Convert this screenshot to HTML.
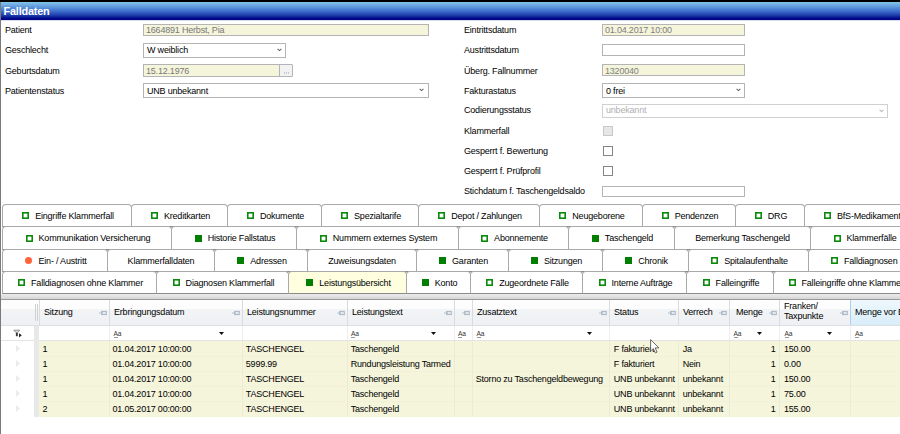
<!DOCTYPE html><html><head><meta charset="utf-8"><style>
*{box-sizing:border-box}
html,body{margin:0;padding:0}
body{width:900px;height:434px;overflow:hidden;position:relative;background:#fff;font-family:"Liberation Sans",sans-serif;font-size:9px;letter-spacing:-0.2px;color:#000}
.a{position:absolute;white-space:nowrap;line-height:12px}
.inp{position:absolute;border:1px solid #b4b4b4;background:#fff}
.dis{background:#f5f5dc}
.tab{position:absolute;height:23px;border:1px solid #a9a9a9;border-bottom-color:#8a8a8a;border-radius:4px 4px 0 0;background:#fff;display:flex;align-items:center;justify-content:center;padding-left:2px;line-height:12px;overflow:hidden;white-space:nowrap}
.hd{position:absolute;top:300px;height:25px;border-right:1px solid #d8dce0;background:linear-gradient(#fdfdfe 0,#fdfdfe 34%,#f3f4f6 35%,#eef0f3 100%)}
.ht{position:absolute;left:4px;top:5.5px;line-height:12px;white-space:nowrap}
.pin{position:absolute;right:2px;top:10px;width:8px;height:6px}
.cell{position:absolute;line-height:15px;white-space:nowrap;overflow:hidden}
</style></head><body>

<div class="a" style="left:0;top:0;width:900px;height:2px;background:#000"></div>
<div class="a" style="left:0;top:2px;width:1px;height:432px;background:#7a7a7a"></div>
<div class="a" style="left:1px;top:2px;width:899px;height:18px;background:linear-gradient(#84c6ea 0%,#5e98dc 28%,#3c6ccc 52%,#1e3caa 74%,#000c8c 90%,#000080 100%)"></div>
<div class="a" style="left:1px;top:20px;width:899px;height:1px;background:#dcdcf0"></div>
<div class="a" style="left:3.5px;top:3.6px;line-height:14px;font-weight:bold;font-size:10.9px;letter-spacing:-0.2px;color:#fff">Falldaten</div>
<div class="a" style="left:5px;top:24.3px;color:#000">Patient</div>
<div class="a" style="left:5px;top:44.3px;color:#000">Geschlecht</div>
<div class="a" style="left:5px;top:64.5px;color:#000">Geburtsdatum</div>
<div class="a" style="left:5px;top:84.7px;color:#000">Patientenstatus</div>
<div class="a" style="left:464px;top:24.3px;color:#000">Eintrittsdatum</div>
<div class="a" style="left:464px;top:44.3px;color:#000">Austrittsdatum</div>
<div class="a" style="left:464px;top:64.5px;color:#000">Überg. Fallnummer</div>
<div class="a" style="left:464px;top:84.7px;color:#000">Fakturastatus</div>
<div class="a" style="left:464px;top:104.0px;color:#000">Codierungsstatus</div>
<div class="a" style="left:464px;top:124.5px;color:#000">Klammerfall</div>
<div class="a" style="left:464px;top:145.0px;color:#000">Gesperrt f. Bewertung</div>
<div class="a" style="left:464px;top:165.0px;color:#000">Gesperrt f. Prüfprofil</div>
<div class="a" style="left:464px;top:185.0px;color:#000">Stichdatum f. Taschengeldsaldo</div>
<div class="inp dis" style="left:143px;top:24px;width:286px;height:12px;"></div>
<div class="a" style="left:146px;top:24.3px;color:#787878">1664891 Herbst, Pia</div>
<div class="inp" style="left:143px;top:43px;width:143px;height:15px;"></div>
<div class="a" style="left:147px;top:44.3px;color:#000">W weiblich</div>
<svg class="a" style="left:277px;top:48px" width="5" height="4" viewBox="0 0 5 4"><path d="M0.6 0.8 L2.5 2.6 L4.4 0.8" fill="none" stroke="#666" stroke-width="1.1"/></svg>
<div class="inp dis" style="left:143px;top:64px;width:138px;height:13px;"></div>
<div class="a" style="left:146px;top:64.5px;color:#787878">15.12.1976</div>
<div class="inp" style="left:279px;top:64px;width:14px;height:13px;background:#f2f2f2;border-color:#b0b4bc;border-radius:1px"></div>
<div class="a" style="left:283.5px;top:72px;width:1px;height:1.5px;background:#c8c8d0"></div>
<div class="a" style="left:285.5px;top:72px;width:1px;height:1.5px;background:#c8c8d0"></div>
<div class="a" style="left:287.5px;top:72px;width:1px;height:1.5px;background:#c8c8d0"></div>
<div class="inp" style="left:143px;top:83px;width:286px;height:15px;"></div>
<div class="a" style="left:147px;top:84.7px;color:#000">UNB unbekannt</div>
<svg class="a" style="left:419px;top:88px" width="5" height="4" viewBox="0 0 5 4"><path d="M0.6 0.8 L2.5 2.6 L4.4 0.8" fill="none" stroke="#666" stroke-width="1.1"/></svg>
<div class="inp dis" style="left:602px;top:24px;width:143px;height:12px;"></div>
<div class="a" style="left:605px;top:24.3px;color:#808080">01.04.2017 10:00</div>
<div class="inp" style="left:602px;top:44px;width:143px;height:12px;"></div>
<div class="inp dis" style="left:602px;top:64px;width:143px;height:12px;"></div>
<div class="a" style="left:605px;top:64.5px;color:#808080">1320040</div>
<div class="inp" style="left:602px;top:83px;width:143px;height:15px;"></div>
<div class="a" style="left:606px;top:84.7px;color:#000">0 frei</div>
<svg class="a" style="left:736px;top:88px" width="5" height="4" viewBox="0 0 5 4"><path d="M0.6 0.8 L2.5 2.6 L4.4 0.8" fill="none" stroke="#666" stroke-width="1.1"/></svg>
<div class="inp" style="left:602px;top:104px;width:286px;height:14px;border-color:#d0d0d0"></div>
<div class="a" style="left:606px;top:104.0px;color:#b0b0b0">unbekannt</div>
<svg class="a" style="left:879px;top:109px" width="5" height="4" viewBox="0 0 5 4"><path d="M0.6 0.8 L2.5 2.6 L4.4 0.8" fill="none" stroke="#b8b8b8" stroke-width="1.1"/></svg>
<div class="inp" style="left:603px;top:126px;width:10px;height:10px;background:#e6e6e6;border-color:#c8c8c8"></div>
<div class="inp" style="left:603px;top:146px;width:10px;height:10px;border-color:#858585"></div>
<div class="inp" style="left:603px;top:166px;width:10px;height:10px;border-color:#858585"></div>
<div class="inp" style="left:602px;top:186px;width:143px;height:11px;"></div>
<div class="tab" style="left:2px;top:204px;width:130px;height:23px;"><svg width="7" height="7" style="flex:none;margin-right:6px" viewBox="0 0 7 7"><rect x="0.8" y="0.8" width="5.4" height="5.4" fill="none" stroke="#0b8a0b" stroke-width="1.6"/></svg><span>Eingriffe Klammerfall</span></div>
<div class="tab" style="left:131px;top:204px;width:97px;height:23px;"><svg width="7" height="7" style="flex:none;margin-right:6px" viewBox="0 0 7 7"><rect x="0.8" y="0.8" width="5.4" height="5.4" fill="none" stroke="#0b8a0b" stroke-width="1.6"/></svg><span>Kreditkarten</span></div>
<div class="tab" style="left:227px;top:204px;width:95px;height:23px;"><svg width="7" height="7" style="flex:none;margin-right:6px" viewBox="0 0 7 7"><rect x="0.8" y="0.8" width="5.4" height="5.4" fill="none" stroke="#0b8a0b" stroke-width="1.6"/></svg><span>Dokumente</span></div>
<div class="tab" style="left:321px;top:204px;width:98px;height:23px;"><svg width="7" height="7" style="flex:none;margin-right:6px" viewBox="0 0 7 7"><rect x="0.8" y="0.8" width="5.4" height="5.4" fill="none" stroke="#0b8a0b" stroke-width="1.6"/></svg><span>Spezialtarife</span></div>
<div class="tab" style="left:418px;top:204px;width:122px;height:23px;"><svg width="7" height="7" style="flex:none;margin-right:6px" viewBox="0 0 7 7"><rect x="0.8" y="0.8" width="5.4" height="5.4" fill="none" stroke="#0b8a0b" stroke-width="1.6"/></svg><span>Depot / Zahlungen</span></div>
<div class="tab" style="left:539px;top:204px;width:104px;height:23px;"><svg width="7" height="7" style="flex:none;margin-right:6px" viewBox="0 0 7 7"><rect x="0.8" y="0.8" width="5.4" height="5.4" fill="none" stroke="#0b8a0b" stroke-width="1.6"/></svg><span>Neugeborene</span></div>
<div class="tab" style="left:642px;top:204px;width:94px;height:23px;"><svg width="7" height="7" style="flex:none;margin-right:6px" viewBox="0 0 7 7"><rect x="0.8" y="0.8" width="5.4" height="5.4" fill="none" stroke="#0b8a0b" stroke-width="1.6"/></svg><span>Pendenzen</span></div>
<div class="tab" style="left:735px;top:204px;width:70px;height:23px;"><svg width="7" height="7" style="flex:none;margin-right:6px" viewBox="0 0 7 7"><rect x="0.8" y="0.8" width="5.4" height="5.4" fill="none" stroke="#0b8a0b" stroke-width="1.6"/></svg><span>DRG</span></div>
<div class="tab" style="left:804px;top:204px;width:197px;height:23px;justify-content:flex-start;padding-left:19px;"><svg width="7" height="7" style="flex:none;margin-right:6px" viewBox="0 0 7 7"><rect x="0.8" y="0.8" width="5.4" height="5.4" fill="none" stroke="#0b8a0b" stroke-width="1.6"/></svg><span>BfS-Medikamente</span></div>
<div class="tab" style="left:2px;top:226px;width:170px;height:24px;"><svg width="7" height="7" style="flex:none;margin-right:6px" viewBox="0 0 7 7"><rect x="0.8" y="0.8" width="5.4" height="5.4" fill="none" stroke="#0b8a0b" stroke-width="1.6"/></svg><span>Kommunikation Versicherung</span></div>
<div class="tab" style="left:171px;top:226px;width:126px;height:24px;"><svg width="7" height="7" style="flex:none;margin-right:6px" viewBox="0 0 7 7"><rect x="0" y="0" width="7" height="7" fill="#007f00"/></svg><span>Historie Fallstatus</span></div>
<div class="tab" style="left:296px;top:226px;width:163px;height:24px;"><svg width="7" height="7" style="flex:none;margin-right:6px" viewBox="0 0 7 7"><rect x="0.8" y="0.8" width="5.4" height="5.4" fill="none" stroke="#0b8a0b" stroke-width="1.6"/></svg><span>Nummern externes System</span></div>
<div class="tab" style="left:458px;top:226px;width:111px;height:24px;"><svg width="7" height="7" style="flex:none;margin-right:6px" viewBox="0 0 7 7"><rect x="0.8" y="0.8" width="5.4" height="5.4" fill="none" stroke="#0b8a0b" stroke-width="1.6"/></svg><span>Abonnemente</span></div>
<div class="tab" style="left:568px;top:226px;width:107px;height:24px;"><svg width="7" height="7" style="flex:none;margin-right:6px" viewBox="0 0 7 7"><rect x="0" y="0" width="7" height="7" fill="#007f00"/></svg><span>Taschengeld</span></div>
<div class="tab" style="left:674px;top:226px;width:137px;height:24px;padding-left:0;"><span>Bemerkung Taschengeld</span></div>
<div class="tab" style="left:810px;top:226px;width:191px;height:24px;justify-content:flex-start;padding-left:22.5px;"><svg width="7" height="7" style="flex:none;margin-right:6px" viewBox="0 0 7 7"><rect x="0.8" y="0.8" width="5.4" height="5.4" fill="none" stroke="#0b8a0b" stroke-width="1.6"/></svg><span>Klammerfälle</span></div>
<div class="tab" style="left:2px;top:249px;width:106px;height:23px;"><svg width="7" height="7" style="flex:none;margin-right:6px" viewBox="0 0 7 7"><circle cx="3.5" cy="3.5" r="3.5" fill="#ff6438"/></svg><span>Ein- / Austritt</span></div>
<div class="tab" style="left:107px;top:249px;width:108px;height:23px;padding-left:0;"><span>Klammerfalldaten</span></div>
<div class="tab" style="left:214px;top:249px;width:94px;height:23px;"><svg width="7" height="7" style="flex:none;margin-right:6px" viewBox="0 0 7 7"><rect x="0" y="0" width="7" height="7" fill="#007f00"/></svg><span>Adressen</span></div>
<div class="tab" style="left:307px;top:249px;width:110px;height:23px;padding-left:0;"><span>Zuweisungsdaten</span></div>
<div class="tab" style="left:416px;top:249px;width:93px;height:23px;"><svg width="7" height="7" style="flex:none;margin-right:6px" viewBox="0 0 7 7"><rect x="0" y="0" width="7" height="7" fill="#007f00"/></svg><span>Garanten</span></div>
<div class="tab" style="left:508px;top:249px;width:95px;height:23px;"><svg width="7" height="7" style="flex:none;margin-right:6px" viewBox="0 0 7 7"><rect x="0" y="0" width="7" height="7" fill="#007f00"/></svg><span>Sitzungen</span></div>
<div class="tab" style="left:602px;top:249px;width:87px;height:23px;"><svg width="7" height="7" style="flex:none;margin-right:6px" viewBox="0 0 7 7"><rect x="0" y="0" width="7" height="7" fill="#007f00"/></svg><span>Chronik</span></div>
<div class="tab" style="left:688px;top:249px;width:121px;height:23px;"><svg width="7" height="7" style="flex:none;margin-right:6px" viewBox="0 0 7 7"><rect x="0.8" y="0.8" width="5.4" height="5.4" fill="none" stroke="#0b8a0b" stroke-width="1.6"/></svg><span>Spitalaufenthalte</span></div>
<div class="tab" style="left:808px;top:249px;width:193px;height:23px;justify-content:flex-start;padding-left:22px;"><svg width="7" height="7" style="flex:none;margin-right:6px" viewBox="0 0 7 7"><rect x="0.8" y="0.8" width="5.4" height="5.4" fill="none" stroke="#0b8a0b" stroke-width="1.6"/></svg><span>Falldiagnosen</span></div>
<div class="tab" style="left:2px;top:271px;width:155px;height:23px;"><svg width="7" height="7" style="flex:none;margin-right:6px" viewBox="0 0 7 7"><rect x="0.8" y="0.8" width="5.4" height="5.4" fill="none" stroke="#0b8a0b" stroke-width="1.6"/></svg><span>Falldiagnosen ohne Klammer</span></div>
<div class="tab" style="left:156px;top:271px;width:133px;height:23px;"><svg width="7" height="7" style="flex:none;margin-right:6px" viewBox="0 0 7 7"><rect x="0.8" y="0.8" width="5.4" height="5.4" fill="none" stroke="#0b8a0b" stroke-width="1.6"/></svg><span>Diagnosen Klammerfall</span></div>
<div class="tab" style="left:288px;top:271px;width:119px;height:23px;background:#ffffe0;"><svg width="7" height="7" style="flex:none;margin-right:6px" viewBox="0 0 7 7"><rect x="0" y="0" width="7" height="7" fill="#007f00"/></svg><span>Leistungsübersicht</span></div>
<div class="tab" style="left:406px;top:271px;width:65px;height:23px;"><svg width="7" height="7" style="flex:none;margin-right:6px" viewBox="0 0 7 7"><rect x="0" y="0" width="7" height="7" fill="#007f00"/></svg><span>Konto</span></div>
<div class="tab" style="left:470px;top:271px;width:113px;height:23px;"><svg width="7" height="7" style="flex:none;margin-right:6px" viewBox="0 0 7 7"><rect x="0.8" y="0.8" width="5.4" height="5.4" fill="none" stroke="#0b8a0b" stroke-width="1.6"/></svg><span>Zugeordnete Fälle</span></div>
<div class="tab" style="left:582px;top:271px;width:105px;height:23px;"><svg width="7" height="7" style="flex:none;margin-right:6px" viewBox="0 0 7 7"><rect x="0.8" y="0.8" width="5.4" height="5.4" fill="none" stroke="#0b8a0b" stroke-width="1.6"/></svg><span>Interne Aufträge</span></div>
<div class="tab" style="left:686px;top:271px;width:88px;height:23px;"><svg width="7" height="7" style="flex:none;margin-right:6px" viewBox="0 0 7 7"><rect x="0.8" y="0.8" width="5.4" height="5.4" fill="none" stroke="#0b8a0b" stroke-width="1.6"/></svg><span>Falleingriffe</span></div>
<div class="tab" style="left:773px;top:271px;width:228px;height:23px;justify-content:flex-start;padding-left:14.5px;"><svg width="7" height="7" style="flex:none;margin-right:6px" viewBox="0 0 7 7"><rect x="0.8" y="0.8" width="5.4" height="5.4" fill="none" stroke="#0b8a0b" stroke-width="1.6"/></svg><span>Falleingriffe ohne Klammer</span></div>
<div class="a" style="left:1px;top:294px;width:899px;height:5px;background:linear-gradient(#ececec,#d6d6d6)"></div>
<div class="a" style="left:1px;top:299px;width:899px;height:1px;background:#999"></div>
<div class="hd" style="left:1px;width:39px;border-right:1px solid #d8dce0"></div>
<div class="a" style="left:35px;top:304px;width:1px;height:17px;background:#d0d0d0"></div>
<div class="a" style="left:37px;top:304px;width:1px;height:17px;background:#d0d0d0"></div>
<div class="hd" style="left:40px;width:70px;"><div class="ht" style="">Sitzung</div><svg class="pin" viewBox="0 0 8 6"><path d="M0 3H2.6M2.6 1V5" fill="none" stroke="#b4c0cc" stroke-width="1"/><rect x="3.1" y="1.4" width="4.2" height="3.2" fill="#e4e9ee" stroke="#a8b6c4" stroke-width="1"/></svg></div>
<div class="hd" style="left:110px;width:133px;"><div class="ht" style="">Erbringungsdatum</div><svg class="pin" viewBox="0 0 8 6"><path d="M0 3H2.6M2.6 1V5" fill="none" stroke="#b4c0cc" stroke-width="1"/><rect x="3.1" y="1.4" width="4.2" height="3.2" fill="#e4e9ee" stroke="#a8b6c4" stroke-width="1"/></svg></div>
<div class="hd" style="left:243px;width:105px;"><div class="ht" style="">Leistungsnummer</div><svg class="pin" viewBox="0 0 8 6"><path d="M0 3H2.6M2.6 1V5" fill="none" stroke="#b4c0cc" stroke-width="1"/><rect x="3.1" y="1.4" width="4.2" height="3.2" fill="#e4e9ee" stroke="#a8b6c4" stroke-width="1"/></svg></div>
<div class="hd" style="left:348px;width:107px;"><div class="ht" style="">Leistungstext</div><svg class="pin" viewBox="0 0 8 6"><path d="M0 3H2.6M2.6 1V5" fill="none" stroke="#b4c0cc" stroke-width="1"/><rect x="3.1" y="1.4" width="4.2" height="3.2" fill="#e4e9ee" stroke="#a8b6c4" stroke-width="1"/></svg></div>
<div class="hd" style="left:455px;width:18px;"><div class="ht" style=""></div><svg class="pin" viewBox="0 0 8 6"><path d="M0 3H2.6M2.6 1V5" fill="none" stroke="#b4c0cc" stroke-width="1"/><rect x="3.1" y="1.4" width="4.2" height="3.2" fill="#e4e9ee" stroke="#a8b6c4" stroke-width="1"/></svg></div>
<div class="hd" style="left:473px;width:137px;"><div class="ht" style="">Zusatztext</div><svg class="pin" viewBox="0 0 8 6"><path d="M0 3H2.6M2.6 1V5" fill="none" stroke="#b4c0cc" stroke-width="1"/><rect x="3.1" y="1.4" width="4.2" height="3.2" fill="#e4e9ee" stroke="#a8b6c4" stroke-width="1"/></svg></div>
<div class="hd" style="left:610px;width:69px;"><div class="ht" style="">Status</div><svg class="pin" viewBox="0 0 8 6"><path d="M0 3H2.6M2.6 1V5" fill="none" stroke="#b4c0cc" stroke-width="1"/><rect x="3.1" y="1.4" width="4.2" height="3.2" fill="#e4e9ee" stroke="#a8b6c4" stroke-width="1"/></svg></div>
<div class="hd" style="left:679px;width:51px;"><div class="ht" style="">Verrech</div><svg class="pin" viewBox="0 0 8 6"><path d="M0 3H2.6M2.6 1V5" fill="none" stroke="#b4c0cc" stroke-width="1"/><rect x="3.1" y="1.4" width="4.2" height="3.2" fill="#e4e9ee" stroke="#a8b6c4" stroke-width="1"/></svg></div>
<div class="hd" style="left:730px;width:50px;"><div class="ht" style="left:6px">Menge</div><svg class="pin" viewBox="0 0 8 6"><path d="M0 3H2.6M2.6 1V5" fill="none" stroke="#b4c0cc" stroke-width="1"/><rect x="3.1" y="1.4" width="4.2" height="3.2" fill="#e4e9ee" stroke="#a8b6c4" stroke-width="1"/></svg></div>
<div class="hd" style="left:780px;width:71px;"><div class="ht" style="top:1.3px;line-height:10px">Franken/<br>Taxpunkte</div><svg class="pin" viewBox="0 0 8 6"><path d="M0 3H2.6M2.6 1V5" fill="none" stroke="#b4c0cc" stroke-width="1"/><rect x="3.1" y="1.4" width="4.2" height="3.2" fill="#e4e9ee" stroke="#a8b6c4" stroke-width="1"/></svg></div>
<div class="hd" style="left:851px;width:150px;background:linear-gradient(#eef8fd,#d9edf9);border-left:1px solid #a8d2f0;border-bottom:1px solid #a8d2f0;margin-left:-1px;height:26px;"><div class="ht" style="">Menge vor Beh.</div></div>
<div class="a" style="left:1px;top:325px;width:899px;height:1px;background:#dcdfe3"></div>
<div class="a" style="left:1px;top:326px;width:899px;height:15px;background:#fff"></div>
<div class="a" style="left:1px;top:340px;width:899px;height:1px;background:#e4e4e4"></div>
<div class="a" style="left:34px;top:326px;width:5px;height:91px;background:#e8e8e8"></div>
<svg class="a" style="left:13px;top:329px" width="10" height="10" viewBox="0 0 10 10"><path d="M0.8 1.2H6.8L4.4 3.8H3.2Z" fill="#ddd" stroke="#8a8a8a" stroke-width="0.9" stroke-linejoin="round"/><rect x="2.9" y="3.8" width="1.9" height="3.4" fill="#333"/><path d="M6 4.2L8.8 6.3L6 8.4Z" fill="#222"/></svg>
<div class="a" style="left:113.5px;top:329px;font-size:6.6px;line-height:9px;color:#333">Aa</div>
<div class="a" style="left:113.8px;top:337px;width:4px;height:1px;background:#999"></div>
<div class="a" style="left:351px;top:329px;font-size:6.6px;line-height:9px;color:#333">Aa</div>
<div class="a" style="left:351.3px;top:337px;width:4px;height:1px;background:#999"></div>
<div class="a" style="left:458px;top:329px;font-size:6.6px;line-height:9px;color:#333">Aa</div>
<div class="a" style="left:458.3px;top:337px;width:4px;height:1px;background:#999"></div>
<div class="a" style="left:476.5px;top:329px;font-size:6.6px;line-height:9px;color:#333">Aa</div>
<div class="a" style="left:476.8px;top:337px;width:4px;height:1px;background:#999"></div>
<div class="a" style="left:733.5px;top:329px;font-size:6.6px;line-height:9px;color:#333">Aa</div>
<div class="a" style="left:733.8px;top:337px;width:4px;height:1px;background:#999"></div>
<div class="a" style="left:784.5px;top:329px;font-size:6.6px;line-height:9px;color:#333">Aa</div>
<div class="a" style="left:784.8px;top:337px;width:4px;height:1px;background:#999"></div>
<div class="a" style="left:855px;top:329px;font-size:6.6px;line-height:9px;color:#333">Aa</div>
<div class="a" style="left:855.3px;top:337px;width:4px;height:1px;background:#999"></div>
<svg class="a" style="left:219.0px;top:332px" width="5" height="3" viewBox="0 0 5 3"><path d="M0 0H5L2.5 3Z" fill="#111"/></svg>
<svg class="a" style="left:431.0px;top:332px" width="5" height="3" viewBox="0 0 5 3"><path d="M0 0H5L2.5 3Z" fill="#111"/></svg>
<svg class="a" style="left:586.5px;top:332px" width="5" height="3" viewBox="0 0 5 3"><path d="M0 0H5L2.5 3Z" fill="#111"/></svg>
<svg class="a" style="left:756.5px;top:332px" width="5" height="3" viewBox="0 0 5 3"><path d="M0 0H5L2.5 3Z" fill="#111"/></svg>
<svg class="a" style="left:827.0px;top:332px" width="5" height="3" viewBox="0 0 5 3"><path d="M0 0H5L2.5 3Z" fill="#111"/></svg>
<div class="a" style="left:109px;top:326px;width:1px;height:14px;background:#eeeeee"></div>
<div class="a" style="left:242px;top:326px;width:1px;height:14px;background:#eeeeee"></div>
<div class="a" style="left:347px;top:326px;width:1px;height:14px;background:#eeeeee"></div>
<div class="a" style="left:454px;top:326px;width:1px;height:14px;background:#eeeeee"></div>
<div class="a" style="left:472px;top:326px;width:1px;height:14px;background:#eeeeee"></div>
<div class="a" style="left:609px;top:326px;width:1px;height:14px;background:#eeeeee"></div>
<div class="a" style="left:729px;top:326px;width:1px;height:14px;background:#eeeeee"></div>
<div class="a" style="left:779px;top:326px;width:1px;height:14px;background:#eeeeee"></div>
<div class="a" style="left:850px;top:326px;width:1px;height:14px;background:#eeeeee"></div>
<div class="a" style="left:39px;top:341px;width:861px;height:76px;background:#f5f5dc"></div>
<svg class="a" style="left:16px;top:345px" width="4" height="7" viewBox="0 0 4 7"><path d="M0 0L4 3.5L0 7Z" fill="#ebebeb"/></svg>
<div class="cell" style="left:39px;top:342px;width:70px;padding-left:3.5px">1</div>
<div class="cell" style="left:109px;top:342px;width:133px;padding-left:3.5px">01.04.2017 10:00:00</div>
<div class="cell" style="left:242px;top:342px;width:105px;padding-left:3.8px">TASCHENGEL</div>
<div class="cell" style="left:347px;top:342px;width:107px;padding-left:3.7px">Taschengeld</div>
<div class="cell" style="left:454px;top:342px;width:18px;padding-left:4px"></div>
<div class="cell" style="left:472px;top:342px;width:137px;padding-left:3.7px"></div>
<div class="cell" style="left:609px;top:342px;width:69px;padding-left:4.8px">F fakturiert</div>
<div class="cell" style="left:678px;top:342px;width:51px;padding-left:4.7px">Ja</div>
<div class="cell" style="left:729px;top:342px;width:50px;text-align:right;padding-right:3.5px">1</div>
<div class="cell" style="left:779px;top:342px;width:71px;padding-left:5px">150.00</div>
<div class="cell" style="left:850px;top:342px;width:150px;padding-left:5px"></div>
<div class="a" style="left:39px;top:356px;width:861px;height:1px;background:#f1f1da"></div>
<svg class="a" style="left:16px;top:360px" width="4" height="7" viewBox="0 0 4 7"><path d="M0 0L4 3.5L0 7Z" fill="#ebebeb"/></svg>
<div class="cell" style="left:39px;top:357px;width:70px;padding-left:3.5px">1</div>
<div class="cell" style="left:109px;top:357px;width:133px;padding-left:3.5px">01.04.2017 10:00:00</div>
<div class="cell" style="left:242px;top:357px;width:105px;padding-left:3.8px">5999.99</div>
<div class="cell" style="left:347px;top:357px;width:107px;padding-left:3.7px">Rundungsleistung Tarmed</div>
<div class="cell" style="left:454px;top:357px;width:18px;padding-left:4px"></div>
<div class="cell" style="left:472px;top:357px;width:137px;padding-left:3.7px"></div>
<div class="cell" style="left:609px;top:357px;width:69px;padding-left:4.8px">F fakturiert</div>
<div class="cell" style="left:678px;top:357px;width:51px;padding-left:4.7px">Nein</div>
<div class="cell" style="left:729px;top:357px;width:50px;text-align:right;padding-right:3.5px">1</div>
<div class="cell" style="left:779px;top:357px;width:71px;padding-left:5px">0.00</div>
<div class="cell" style="left:850px;top:357px;width:150px;padding-left:5px"></div>
<div class="a" style="left:39px;top:371px;width:861px;height:1px;background:#f1f1da"></div>
<svg class="a" style="left:16px;top:375px" width="4" height="7" viewBox="0 0 4 7"><path d="M0 0L4 3.5L0 7Z" fill="#ebebeb"/></svg>
<div class="cell" style="left:39px;top:372px;width:70px;padding-left:3.5px">1</div>
<div class="cell" style="left:109px;top:372px;width:133px;padding-left:3.5px">01.04.2017 10:00:00</div>
<div class="cell" style="left:242px;top:372px;width:105px;padding-left:3.8px">TASCHENGEL</div>
<div class="cell" style="left:347px;top:372px;width:107px;padding-left:3.7px">Taschengeld</div>
<div class="cell" style="left:454px;top:372px;width:18px;padding-left:4px"></div>
<div class="cell" style="left:472px;top:372px;width:137px;padding-left:3.7px">Storno zu Taschengeldbewegung</div>
<div class="cell" style="left:609px;top:372px;width:69px;padding-left:4.8px">UNB unbekannt</div>
<div class="cell" style="left:678px;top:372px;width:51px;padding-left:4.7px">unbekannt</div>
<div class="cell" style="left:729px;top:372px;width:50px;text-align:right;padding-right:3.5px">1</div>
<div class="cell" style="left:779px;top:372px;width:71px;padding-left:5px">150.00</div>
<div class="cell" style="left:850px;top:372px;width:150px;padding-left:5px"></div>
<div class="a" style="left:39px;top:386px;width:861px;height:1px;background:#f1f1da"></div>
<svg class="a" style="left:16px;top:390px" width="4" height="7" viewBox="0 0 4 7"><path d="M0 0L4 3.5L0 7Z" fill="#ebebeb"/></svg>
<div class="cell" style="left:39px;top:387px;width:70px;padding-left:3.5px">1</div>
<div class="cell" style="left:109px;top:387px;width:133px;padding-left:3.5px">01.04.2017 10:00:00</div>
<div class="cell" style="left:242px;top:387px;width:105px;padding-left:3.8px">TASCHENGEL</div>
<div class="cell" style="left:347px;top:387px;width:107px;padding-left:3.7px">Taschengeld</div>
<div class="cell" style="left:454px;top:387px;width:18px;padding-left:4px"></div>
<div class="cell" style="left:472px;top:387px;width:137px;padding-left:3.7px"></div>
<div class="cell" style="left:609px;top:387px;width:69px;padding-left:4.8px">UNB unbekannt</div>
<div class="cell" style="left:678px;top:387px;width:51px;padding-left:4.7px">unbekannt</div>
<div class="cell" style="left:729px;top:387px;width:50px;text-align:right;padding-right:3.5px">1</div>
<div class="cell" style="left:779px;top:387px;width:71px;padding-left:5px">75.00</div>
<div class="cell" style="left:850px;top:387px;width:150px;padding-left:5px"></div>
<div class="a" style="left:39px;top:401px;width:861px;height:1px;background:#f1f1da"></div>
<svg class="a" style="left:16px;top:405px" width="4" height="7" viewBox="0 0 4 7"><path d="M0 0L4 3.5L0 7Z" fill="#ebebeb"/></svg>
<div class="cell" style="left:39px;top:402px;width:70px;padding-left:3.5px">2</div>
<div class="cell" style="left:109px;top:402px;width:133px;padding-left:3.5px">01.05.2017 00:00:00</div>
<div class="cell" style="left:242px;top:402px;width:105px;padding-left:3.8px">TASCHENGEL</div>
<div class="cell" style="left:347px;top:402px;width:107px;padding-left:3.7px">Taschengeld</div>
<div class="cell" style="left:454px;top:402px;width:18px;padding-left:4px"></div>
<div class="cell" style="left:472px;top:402px;width:137px;padding-left:3.7px"></div>
<div class="cell" style="left:609px;top:402px;width:69px;padding-left:4.8px">UNB unbekannt</div>
<div class="cell" style="left:678px;top:402px;width:51px;padding-left:4.7px">unbekannt</div>
<div class="cell" style="left:729px;top:402px;width:50px;text-align:right;padding-right:3.5px">1</div>
<div class="cell" style="left:779px;top:402px;width:71px;padding-left:5px">155.00</div>
<div class="cell" style="left:850px;top:402px;width:150px;padding-left:5px"></div>
<div class="a" style="left:109px;top:341px;width:1px;height:76px;background:#ebebd6"></div>
<div class="a" style="left:242px;top:341px;width:1px;height:76px;background:#ebebd6"></div>
<div class="a" style="left:347px;top:341px;width:1px;height:76px;background:#ebebd6"></div>
<div class="a" style="left:454px;top:341px;width:1px;height:76px;background:#ebebd6"></div>
<div class="a" style="left:472px;top:341px;width:1px;height:76px;background:#ebebd6"></div>
<div class="a" style="left:609px;top:341px;width:1px;height:76px;background:#ebebd6"></div>
<div class="a" style="left:678px;top:341px;width:1px;height:76px;background:#ebebd6"></div>
<div class="a" style="left:729px;top:341px;width:1px;height:76px;background:#ebebd6"></div>
<div class="a" style="left:779px;top:341px;width:1px;height:76px;background:#ebebd6"></div>
<div class="a" style="left:850px;top:341px;width:1px;height:76px;background:#ebebd6"></div>
<svg class="a" style="left:650px;top:338.5px" width="11" height="16" viewBox="0 0 11 16"><path d="M0.6 0.6V12L3.3 9.6L5.4 13.9L7.1 13.1L5.1 8.9H8.9Z" fill="#fff" stroke="#5a5a5a" stroke-width="0.9" stroke-linejoin="round"/></svg>
</body></html>
